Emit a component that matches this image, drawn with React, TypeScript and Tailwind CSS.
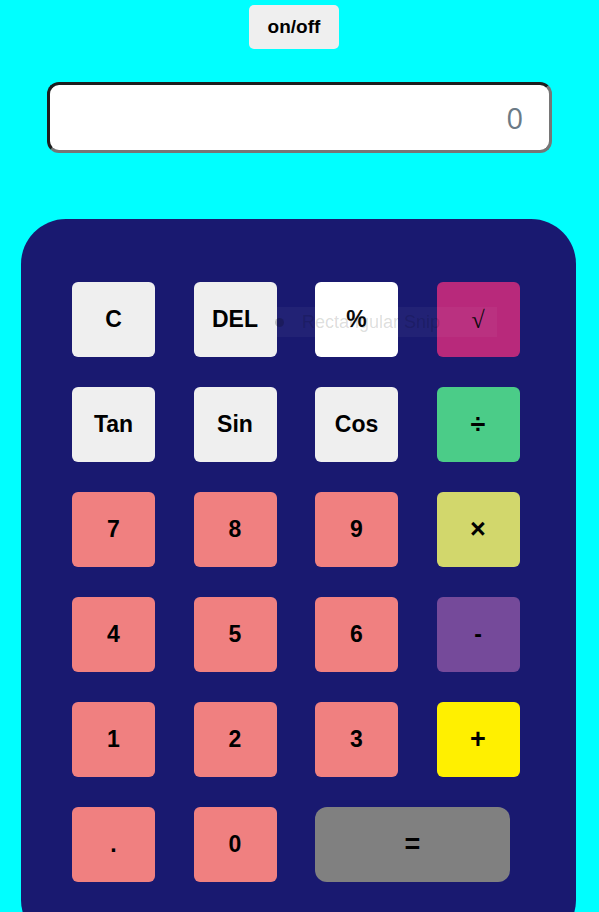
import React from 'react';

type Key = { label: string; bg: string; wide?: boolean; serif?: boolean; big?: boolean };

const keys: Key[] = [
  { label: 'C', bg: 'bg-[#efefef]' },
  { label: 'DEL', bg: 'bg-[#efefef]' },
  { label: '%', bg: 'bg-white' },
  { label: '√', bg: 'bg-[#b8297b]', serif: true },
  { label: 'Tan', bg: 'bg-[#efefef]' },
  { label: 'Sin', bg: 'bg-[#efefef]' },
  { label: 'Cos', bg: 'bg-[#efefef]' },
  { label: '÷', bg: 'bg-[#4bcc88]', big: true },
  { label: '7', bg: 'bg-[#f08080]' },
  { label: '8', bg: 'bg-[#f08080]' },
  { label: '9', bg: 'bg-[#f08080]' },
  { label: '×', bg: 'bg-[#d2d76c]', big: true },
  { label: '4', bg: 'bg-[#f08080]' },
  { label: '5', bg: 'bg-[#f08080]' },
  { label: '6', bg: 'bg-[#f08080]' },
  { label: '-', bg: 'bg-[#754a9a]' },
  { label: '1', bg: 'bg-[#f08080]' },
  { label: '2', bg: 'bg-[#f08080]' },
  { label: '3', bg: 'bg-[#f08080]' },
  { label: '+', bg: 'bg-[#fff000]', big: true },
  { label: '.', bg: 'bg-[#f08080]' },
  { label: '0', bg: 'bg-[#f08080]' },
  { label: '=', bg: 'bg-[#808080]', wide: true, big: true },
];

export default function App() {
  return (
    <div className="h-[912px] bg-[#00ffff] font-['Liberation_Sans',Arial,sans-serif] overflow-hidden">
      <div className="flex justify-center pt-[5px] pr-[11px]">
        <button className="w-[90px] h-[44px] rounded-[5px] bg-[#efefef] text-[19px] font-bold text-black">
          on/off
        </button>
      </div>

      <div className="mt-[33px] mx-[47px] h-[71px] rounded-[12px] border-[3px] border-t-[#1e1e1e] border-l-[#1e1e1e] border-b-[#767676] border-r-[#767676] bg-white flex items-center justify-end pr-[26px]">
        <span className="font-['Open_Sans',sans-serif] text-[29px] text-[#6b7a86] leading-none">0</span>
      </div>

      <div className="relative mt-[66px] ml-[21px] w-[555px] rounded-[45px] bg-[#191970] pt-[63px] pl-[51px] pb-[63px]">
        <div className="grid grid-cols-[repeat(4,83px)] auto-rows-[75px] gap-x-[38.5px] gap-y-[30px]">
          {keys.map((k) => (
            <button
              key={k.label}
              className={`${k.bg} ${k.wide ? 'col-span-2 w-[195px] rounded-[12px]' : 'rounded-[6px]'} flex items-center justify-center text-black ${k.serif ? "font-['Liberation_Serif',serif] font-normal text-[24px]" : k.big ? 'text-[27px] font-bold' : 'text-[23px] font-bold'}`}
            >
              {k.label}
            </button>
          ))}
        </div>

        {/* leftover snip overlay */}
        <div className="absolute left-[240px] top-[88px] w-[236px] h-[30px] bg-white/[0.04] flex items-center pointer-events-none">
          <span className="ml-[14px] w-[9px] h-[9px] rounded-full bg-black/20"></span>
          <span className="ml-[18px] text-[18px] text-black/15">Rectangular Snip</span>
        </div>
      </div>
    </div>
  );
}
